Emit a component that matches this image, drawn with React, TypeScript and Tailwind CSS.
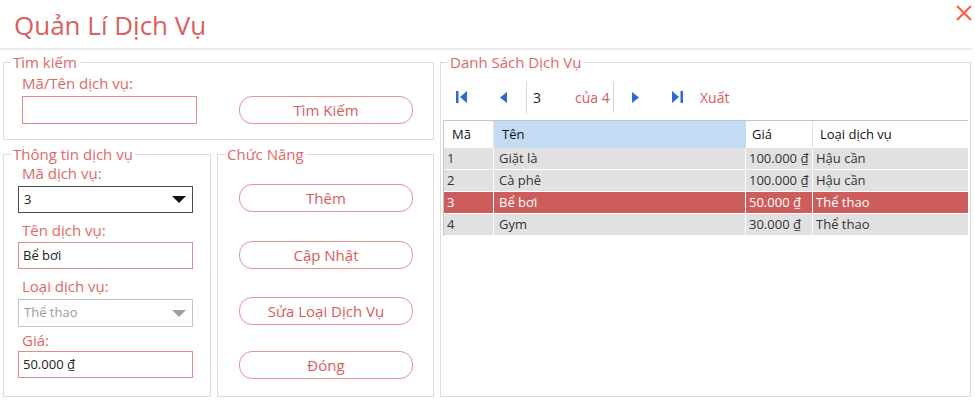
import React from "react";

const rows = [
  { id: "1", name: "Giặt là", price: "100.000 ₫", type: "Hậu cần" },
  { id: "2", name: "Cà phê", price: "100.000 ₫", type: "Hậu cần" },
  { id: "3", name: "Bể bơi", price: "50.000 ₫", type: "Thể thao", selected: true },
  { id: "4", name: "Gym", price: "30.000 ₫", type: "Thể thao" },
];

const Group = ({ title, className, children }: any) => (
  <fieldset className={`border border-[#dcdcdc] min-w-0 ${className}`}>
    <legend className="ml-[7px] px-[2px] text-[15px] leading-[20px] text-[#e06868]">{title}</legend>
    {children}
  </fieldset>
);

const RoundButton = ({ label, className }: any) => (
  <button
    className={`w-[174px] h-[28px] rounded-[13px] border-[1.5px] border-[#e69090] bg-white text-[15px] leading-[20px] text-[#d65c5c] ${className}`}
  >
    {label}
  </button>
);

const Label = ({ children, className }: any) => (
  <div className={`text-[15px] leading-[20px] text-[#e06868] ${className}`}>{children}</div>
);

const Caret = ({ color }: { color: string }) => (
  <svg width="14" height="7" viewBox="0 0 14 7">
    <path d="M0 0 L14 0 L7 7 Z" fill={color} />
  </svg>
);

const Blue = "#2f68d2";

export default function App() {
  return (
    <div className="w-[975px] h-[400px] bg-white font-['Open_Sans',sans-serif] overflow-hidden">
      {/* header */}
      <div className="flex justify-between h-[48px]">
        <div className="pl-[14px] pt-[7px] text-[26px] leading-[36px] text-[#d8605f]">Quản Lí Dịch Vụ</div>
        <svg width="18" height="18" viewBox="0 0 18 18" className="mt-[4px] mr-[2px]">
          <path d="M2 2 L16 16 M16 2 L2 16" stroke="#ff5a36" strokeWidth="2" />
        </svg>
      </div>
      <div className="w-[972px] h-[2px] bg-[#ececec]" />

      {/* body */}
      <div className="flex gap-[6px] pl-[3px] pt-[2px]">
        <div className="w-[431px] flex flex-col gap-[4px]">
          <Group title="Tìm kiếm" className="w-[431px] h-[88px]">
            <div className="flex items-end pl-[18px] pt-[1px]">
              <div>
                <Label>Mã/Tên dịch vụ:</Label>
                <div className="mt-[3px] w-[175px] h-[28px] border border-[#e48a8a]" />
              </div>
              <RoundButton label="Tìm Kiếm" className="ml-[42px]" />
            </div>
          </Group>

          <div className="flex gap-[6px]">
            <Group title="Thông tin dịch vụ" className="w-[208px] h-[253px]">
              <div className="pl-[14px]">
                <Label className="ml-[4px] -mt-[1px]">Mã dịch vụ:</Label>
                <div className="mt-[3px] w-[175px] h-[27px] border border-[#4a4a4a] flex items-center justify-between pl-[5px] pr-[6px] text-[13px] text-[#222]">
                  <span>3</span>
                  <Caret color="#111" />
                </div>
                <Label className="ml-[4px] mt-[7px]">Tên dịch vụ:</Label>
                <div className="mt-[2px] w-[175px] h-[27px] border border-[#e48a8a] flex items-center pl-[4px] text-[13px] text-[#222]">
                  Bể bơi
                </div>
                <Label className="ml-[4px] mt-[7px]">Loại dịch vụ:</Label>
                <div className="mt-[3px] w-[175px] h-[28px] border border-[#c4c4c4] flex items-center justify-between pl-[5px] pr-[6px] text-[13px] text-[#9c9c9c]">
                  <span>Thể thao</span>
                  <Caret color="#a0a0a0" />
                </div>
                <Label className="ml-[4px] mt-[3px]">Giá:</Label>
                <div className="mt-[1px] w-[175px] h-[27px] border border-[#e48a8a] flex items-center pl-[4px] text-[13px] text-[#222]">
                  50.000 ₫
                </div>
              </div>
            </Group>

            <Group title="Chức Năng" className="w-[217px] h-[253px]">
              <div className="flex flex-col pl-[21px]">
                <RoundButton label="Thêm" className="mt-[20px]" />
                <RoundButton label="Cập Nhật" className="mt-[29px]" />
                <RoundButton label="Sửa Loại Dịch Vụ" className="mt-[28px]" />
                <RoundButton label="Đóng" className="mt-[26px]" />
              </div>
            </Group>
          </div>
        </div>

        <Group title="Danh Sách Dịch Vụ" className="w-[531px] h-[345px]">
          {/* toolbar */}
          <div className="mt-[9px] h-[32px] flex items-center text-[14px]">
            <div className="w-[15px]" />
            <svg width="12" height="12" viewBox="0 0 12 12">
              <rect x="0" y="0" width="2.5" height="12" fill={Blue} />
              <path d="M11 0 L4 6 L11 12 Z" fill={Blue} />
            </svg>
            <svg width="8" height="11" viewBox="0 0 8 11" className="ml-[32px]">
              <path d="M7 0 L0 5.5 L7 11 Z" fill={Blue} />
            </svg>
            <div className="ml-[18px] w-px h-[31px] bg-[#d6d6d6]" />
            <span className="ml-[6px] w-[42px] text-[#222]">3</span>
            <span className="w-[38px] text-[#d65c5c]">của 4</span>
            <div className="w-px h-[31px] bg-[#d6d6d6]" />
            <svg width="8" height="11" viewBox="0 0 8 11" className="ml-[18px]">
              <path d="M0 0 L7 5.5 L0 11 Z" fill={Blue} />
            </svg>
            <svg width="12" height="12" viewBox="0 0 12 12" className="ml-[31px]">
              <path d="M1 0 L8 6 L1 12 Z" fill={Blue} />
              <rect x="9.5" y="0" width="2.5" height="12" fill={Blue} />
            </svg>
            <span className="ml-[17px] text-[#d65c5c]">Xuất</span>
          </div>

          {/* grid */}
          <div className="mt-[7px] ml-[2px] w-[525px] border-t border-l border-[#c4c4c4] text-[13px]">
            <div className="flex h-[27px] items-center text-[#111]">
              <div className="w-[50px] h-full flex items-center pl-[8px] border-r border-[#e4e4e4]">Mã</div>
              <div className="w-[252px] h-full flex items-center pl-[8px] bg-[#c4dcf3]">Tên</div>
              <div className="w-[67px] h-full flex items-center pl-[6px] border-r border-[#e4e4e4]">Giá</div>
              <div className="flex-1 h-full flex items-center pl-[7px]">Loại dịch vụ</div>
            </div>
            {rows.map((r) => (
              <div
                key={r.id}
                className={`flex h-[22px] border-b border-white ${
                  r.selected ? "bg-[#cd5c5c] text-white" : "bg-[#e1e1e1] text-[#333]"
                }`}
              >
                <div className="w-[50px] flex items-center pl-[3px] border-r border-white">{r.id}</div>
                <div className="w-[252px] flex items-center pl-[5px] border-r border-white">{r.name}</div>
                <div className="w-[67px] flex items-center pl-[3px] border-r border-white">{r.price}</div>
                <div className="flex-1 flex items-center pl-[3px]">{r.type}</div>
              </div>
            ))}
          </div>
        </Group>
      </div>
    </div>
  );
}
